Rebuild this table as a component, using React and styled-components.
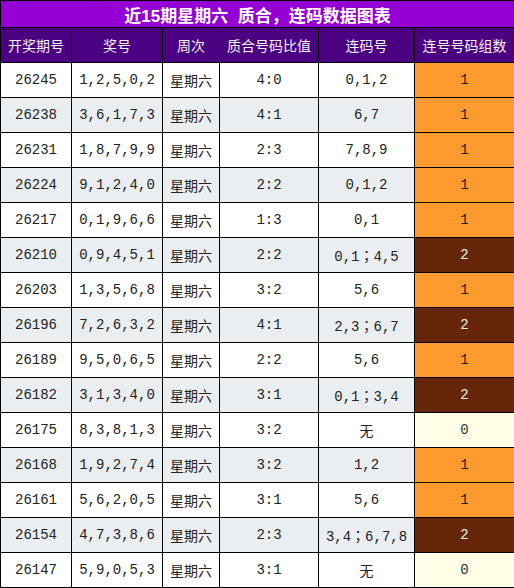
import React from 'react';
import styled, { createGlobalStyle } from 'styled-components';

const GlobalStyle = createGlobalStyle`
  html, body {
    margin: 0;
    padding: 0;
    background: #fff;
  }
  body {
    font-family: 'Liberation Mono', 'Noto Sans CJK SC', monospace;
  }
`;

const Table = styled.table`
  width: 514px;
  border-collapse: collapse;
  table-layout: fixed;
  border: 1px solid #000;
`;

const TitleCell = styled.th`
  height: 26px;
  padding: 0;
  background: #9400d3;
  color: #fff;
  font-family: 'Liberation Sans', 'Noto Sans CJK SC', sans-serif;
  font-size: 17px;
  font-weight: 700;
  text-align: center;
  border: 1px solid #000;
  white-space: pre;
`;

const HeadCell = styled.th`
  height: 34px;
  padding: 0;
  background: #4b0082;
  color: #f2f2f2;
  font-family: 'Noto Sans CJK SC', sans-serif;
  font-size: 14px;
  font-weight: 400;
  text-align: center;
  border: 1px solid #000;
`;

const Row = styled.tr`
  background: ${p => (p.$alt ? '#ebeef1' : '#fff')};
`;

const Cell = styled.td`
  height: 34px;
  padding: 0;
  color: #222;
  font-family: 'Liberation Mono', 'Noto Sans CJK SC', monospace;
  font-size: 14px;
  text-align: center;
  border: 1px solid #000;
  white-space: nowrap;
`;

/* full-width semicolon, centred in its em box */
const Sep = styled.span`
  font-family: 'Noto Sans CJK TC', sans-serif;
`;

const groupColors = {
  0: { bg: '#fffee6', fg: '#333' },
  1: { bg: '#ff9a2e', fg: '#222' },
  2: { bg: '#652609', fg: '#eee' },
};

const CountCell = styled(Cell)`
  background: ${p => groupColors[p.$n].bg};
  color: ${p => groupColors[p.$n].fg};
`;

const rows = [
  ['26245', '1,2,5,0,2', '4:0', '0,1,2', 1],
  ['26238', '3,6,1,7,3', '4:1', '6,7', 1],
  ['26231', '1,8,7,9,9', '2:3', '7,8,9', 1],
  ['26224', '9,1,2,4,0', '2:2', '0,1,2', 1],
  ['26217', '0,1,9,6,6', '1:3', '0,1', 1],
  ['26210', '0,9,4,5,1', '2:2', '0,1;4,5', 2],
  ['26203', '1,3,5,6,8', '3:2', '5,6', 1],
  ['26196', '7,2,6,3,2', '4:1', '2,3;6,7', 2],
  ['26189', '9,5,0,6,5', '2:2', '5,6', 1],
  ['26182', '3,1,3,4,0', '3:1', '0,1;3,4', 2],
  ['26175', '8,3,8,1,3', '3:2', '无', 0],
  ['26168', '1,9,2,7,4', '3:2', '1,2', 1],
  ['26161', '5,6,2,0,5', '3:1', '5,6', 1],
  ['26154', '4,7,3,8,6', '2:3', '3,4;6,7,8', 2],
  ['26147', '5,9,0,5,3', '3:1', '无', 0],
];

const widths = [71, 91, 57, 99, 96, 100];
const heads = ['开奖期号', '奖号', '周次', '质合号码比值', '连码号', '连号号码组数'];

function Consec({ text }) {
  const parts = text.split(';');
  return parts.map((p, i) => (
    <React.Fragment key={i}>
      {i > 0 && <Sep>；</Sep>}
      {p}
    </React.Fragment>
  ));
}

export default function App() {
  return (
    <>
      <GlobalStyle />
      <Table>
        <colgroup>
          {widths.map((w, i) => (
            <col key={i} style={{ width: w }} />
          ))}
        </colgroup>
        <thead>
          <tr>
            <TitleCell colSpan={6}>近15期星期六  质合，连码数据图表</TitleCell>
          </tr>
          <tr>
            {heads.map(h => (
              <HeadCell key={h}>{h}</HeadCell>
            ))}
          </tr>
        </thead>
        <tbody>
          {rows.map(([issue, nums, ratio, consec, n], i) => (
            <Row key={issue} $alt={i % 2 === 1}>
              <Cell>{issue}</Cell>
              <Cell>{nums}</Cell>
              <Cell>星期六</Cell>
              <Cell>{ratio}</Cell>
              <Cell>
                <Consec text={consec} />
              </Cell>
              <CountCell $n={n}>{n}</CountCell>
            </Row>
          ))}
        </tbody>
      </Table>
    </>
  );
}
